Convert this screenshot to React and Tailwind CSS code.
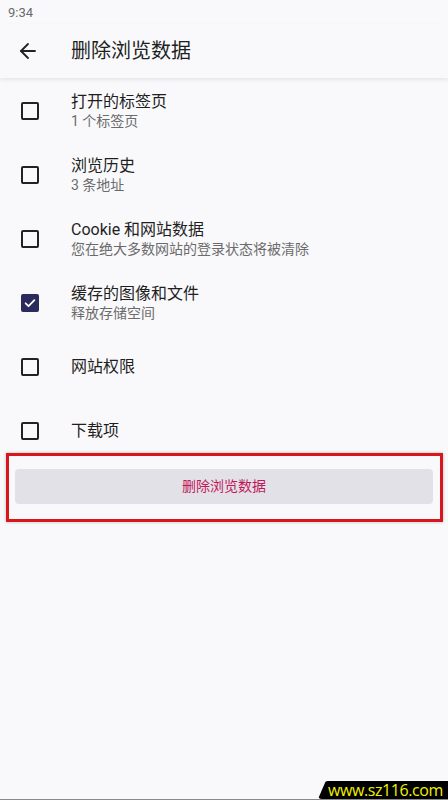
import { ArrowLeft } from "lucide-react";

const rows = [
  { title: "打开的标签页", sub: "1 个标签页" },
  { title: "浏览历史", sub: "3 条地址" },
  { title: "Cookie 和网站数据", sub: "您在绝大多数网站的登录状态将被清除" },
  { title: "缓存的图像和文件", sub: "释放存储空间", checked: true },
  { title: "网站权限" },
  { title: "下载项" },
];

function Checkbox({ checked }) {
  if (checked) {
    return (
      <div className="w-[18px] h-[18px] rounded-[2px] bg-[#2b2a5c] flex items-center justify-center">
        <svg width="14" height="14" viewBox="0 0 24 24" fill="none" stroke="white" strokeWidth="3" strokeLinecap="round" strokeLinejoin="round">
          <path d="M4.5 12.5l5 5L19.5 7" />
        </svg>
      </div>
    );
  }
  return <div className="w-[18px] h-[18px] rounded-[2px] border-2 border-[#222]" />;
}

export default function App() {
  return (
    <div className="relative min-h-[800px] bg-[#f9f9fb] font-['Roboto','Noto_Sans_CJK_SC',sans-serif] overflow-hidden">
      <div className="h-6 pl-2 pt-[3px] text-[13px] text-[#6a6a6a]">9:34</div>
      <div className="h-[54px] flex items-center shadow-[0_2px_4px_rgba(0,0,0,0.08)]">
        <ArrowLeft className="ml-4 w-6 h-6 text-[#222]" strokeWidth={1.8} />
        <div className="ml-[31px] text-[20px] text-[#1f1f1f]">删除浏览数据</div>
      </div>

      <div className="pt-px">
        {rows.map((r) => (
          <div key={r.title} className="h-16 flex items-center">
            <div className="ml-[21px] w-[18px]">
              <Checkbox checked={r.checked} />
            </div>
            <div className="ml-[32px] flex flex-col">
              <div className="text-[16px] leading-5 text-[#1f1f1f]">{r.title}</div>
              {r.sub && <div className="text-[14px] leading-[18px] text-[#6b6b6b]">{r.sub}</div>}
            </div>
          </div>
        ))}
      </div>

      <div className="relative pt-[6px] px-[15px]">
        <div className="h-[35px] w-[418px] rounded bg-[#e2e1e7] flex items-center justify-center text-[14px] text-[#c2185b]">
          删除浏览数据
        </div>
        <div className="absolute left-[6px] right-[5px] -top-[10px] h-[69px] border-[3px] border-[#d8161c] shadow-[0_0_3px_rgba(0,0,0,0.25)]" />
      </div>

      <div className="absolute right-0 bottom-[1px] h-[18px] w-[130px] bg-black rounded-tl-[10px] rounded-bl-[4px] [clip-path:polygon(6%_0,100%_0,100%_100%,0_100%)] flex items-center justify-end pr-[5px]">
        <span className="text-[16px] leading-[18px] text-[#f2f000] font-['Open_Sans',sans-serif] tracking-[-0.4px] whitespace-nowrap">www.sz116.com</span>
      </div>
      <div className="absolute left-0 right-0 bottom-0 h-px bg-[#8a8a8a]" />
    </div>
  );
}
